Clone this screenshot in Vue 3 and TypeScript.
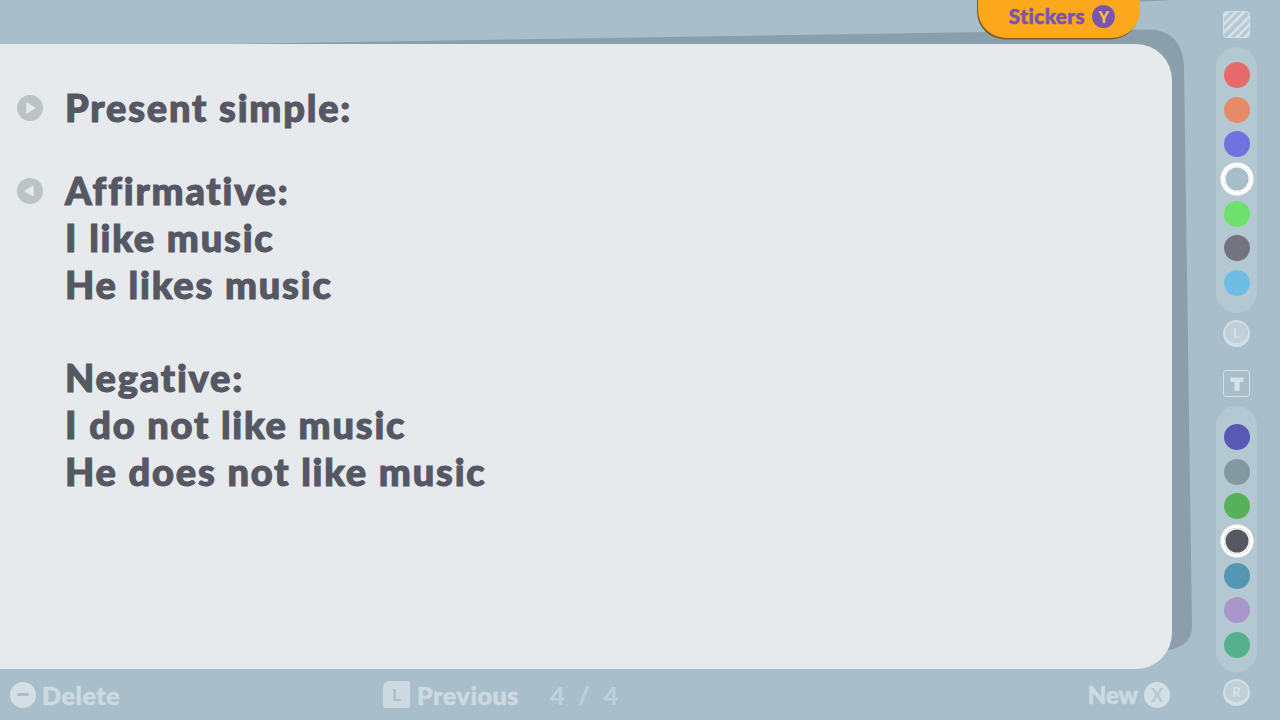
<script setup lang="ts">
interface Swatch { color: string; selected?: boolean }
const inkColors: Swatch[] = [
  { color: '#e66a6c' }, { color: '#e58b68' }, { color: '#7272e0' },
  { color: '#a8bfcb', selected: true }, { color: '#6ee06e' }, { color: '#73737f' }, { color: '#6fbde5' },
]
const textColors: Swatch[] = [
  { color: '#5a58b5' }, { color: '#84999f' }, { color: '#57b05a' },
  { color: '#555763', selected: true }, { color: '#5596b5' }, { color: '#ab96cc' }, { color: '#57b08c' },
]
const lines = ['Affirmative:', 'I like music', 'He likes music', '', 'Negative:', 'I do not like music', 'He does not like music']
</script>

<template>
  <div class="screen">
    <svg class="back" width="1280" height="720" viewBox="0 0 1280 720" aria-hidden="true">
      <path d="M230 44 L1146 29.5 Q1182 29 1184 66 L1192 626 Q1192 646 1168 650 L1100 650 L230 650 Z" fill="#8a9fab" />
      <path d="M1136 0 L1172 0 L1136 2 Z" fill="#8a9fab" />
    </svg>

    <div class="tab">
      <span class="tab-label">Stickers</span>
      <span class="tab-key">Y</span>
    </div>

    <main class="main">
      <div class="top-gap"></div>
      <section class="card">
        <div class="row first">
          <span class="pager">
            <svg width="26" height="26" viewBox="0 0 26 26"><circle cx="13" cy="13" r="13" fill="#bcc3c7" /><path d="M10 8.5 L17.5 13 L10 17.5 Z" fill="#e6eaed" stroke="#e6eaed" stroke-width="1.5" stroke-linejoin="round" /></svg>
          </span>
          <h1 class="text">Present simple:</h1>
        </div>
        <div class="row second">
          <span class="pager">
            <svg width="26" height="26" viewBox="0 0 26 26"><circle cx="13" cy="13" r="13" fill="#bcc3c7" /><path d="M16 8.5 L8.5 13 L16 17.5 Z" fill="#e6eaed" stroke="#e6eaed" stroke-width="1.5" stroke-linejoin="round" /></svg>
          </span>
          <div class="text">
            <div v-for="(line, i) in lines" :key="i" class="line">{{ line }}</div>
          </div>
        </div>
      </section>
      <footer class="footer">
        <div class="foot-item delete">
          <span class="round-key"><span class="minus"></span></span>
          <span class="foot-label">Delete</span>
        </div>
        <div class="foot-item prev">
          <span class="l-key">L</span>
          <span class="foot-label">Previous</span>
        </div>
        <div class="foot-item pages"><span>4</span><span>/</span><span>4</span></div>
        <div class="foot-item new">
          <span class="foot-label tight">New</span>
          <span class="round-key x">X</span>
        </div>
      </footer>
    </main>

    <aside class="rail">
      <svg class="hatch" width="27" height="27" viewBox="0 0 27 27">
        <defs><clipPath id="hatch-clip"><rect x="0.5" y="0.5" width="26" height="26" rx="3" /></clipPath></defs>
        <rect x="0.5" y="0.5" width="26" height="26" rx="3" fill="#b6cad4" stroke="#d3e0e6" />
        <g clip-path="url(#hatch-clip)" stroke="#d8e3e9" stroke-width="2.5">
          <path d="M-3 9 L9 -3 M-3 17 L17 -3 M-3 25 L25 -3 M3 29 L29 3 M11 29 L29 11 M19 29 L29 19" />
        </g>
      </svg>
      <div class="pill">
        <span v-for="s in inkColors" :key="s.color" class="dot" :class="{ selected: s.selected }" :style="{ background: s.color }"></span>
      </div>
      <span class="stick-key l"><span class="stick-inner">L</span></span>
      <span class="t-tool">
        <svg width="18" height="18" viewBox="0 0 18 18"><path d="M3.5 2.5 H14.5 Q15.5 2.5 15.5 3.5 V6 Q15.5 7 14.5 7 H11.5 V14.5 Q11.5 16 9 16 Q6.5 16 6.5 14.5 V7 H3.5 Q2.5 7 2.5 6 V3.5 Q2.5 2.5 3.5 2.5 Z" fill="#d8e3e9" /></svg>
      </span>
      <div class="pill second-pill">
        <span v-for="s in textColors" :key="s.color" class="dot" :class="{ selected: s.selected }" :style="{ background: s.color }"></span>
      </div>
      <span class="stick-key r"><span class="stick-inner">R</span></span>
    </aside>
  </div>
</template>

<style>
html, body { margin: 0; background: #a8bfcb; }
</style>

<style scoped>
.screen {
  position: relative;
  width: 1280px;
  height: 720px;
  overflow: hidden;
  display: flex;
  background: #a8bfcb;
  font-family: Lato, "Open Sans", sans-serif;
  font-weight: 900;
}
.back { position: absolute; left: 0; top: 0; }
.tab {
  position: absolute;
  left: 978px;
  top: -20px;
  width: 162px;
  height: 58px;
  box-sizing: border-box;
  padding: 14px 0 0 6px;
  display: flex;
  align-items: center;
  justify-content: center;
  gap: 7px;
  background: #fca81c;
  border-radius: 0 0 28px 28px;
  box-shadow: -1px 1.5px 0 #7c5a25;
  color: #7a55b0;
  font-size: 20.5px;
  z-index: 2;
}
.tab-label { letter-spacing: 0.5px; -webkit-text-stroke: 0.6px #7a55b0; }
.tab-key {
  width: 23px;
  height: 23px;
  border-radius: 50%;
  background: #7a55b0;
  color: #fcc04c;
  font-size: 16px;
  line-height: 23px;
  text-align: center;
}
.main {
  position: relative;
  width: 1172px;
  display: flex;
  flex-direction: column;
}
.top-gap { height: 44px; flex: none; }
.card {
  height: 625px;
  flex: none;
  box-sizing: border-box;
  padding: 40px 0 0 17px;
  background: #e6eaed;
  border-radius: 0 36px 36px 0;
  color: #555763;
  font-size: 38px;
  line-height: 46.8px;
}
.row { display: flex; align-items: flex-start; }
.second { margin-top: 36px; }
.pager { width: 26px; height: 47px; flex: none; margin-right: 22px; display: flex; align-items: center; }
.pager svg { display: block; margin-top: 1px; }
.text { margin: 0; font: inherit; letter-spacing: 1.8px; -webkit-text-stroke: 1.1px #555763; }
.line { height: 46.8px; }
.footer {
  height: 51px;
  flex: none;
  display: flex;
  align-items: center;
  color: #cddae1;
  font-size: 25px;
  box-sizing: border-box;
  padding: 0 2px 0 10px;
}
.foot-label { letter-spacing: 0.6px; -webkit-text-stroke: 0.6px #cddae1; }
.foot-label.tight { letter-spacing: 0; font-size: 24px; }
.foot-item { display: flex; align-items: center; }
.delete { gap: 6px; width: 373px; }
.prev { gap: 7px; width: 167px; }
.pages { width: 68px; justify-content: space-between; color: #bfd0d9; }
.new { margin-left: auto; gap: 6px; }
.round-key {
  width: 26px;
  height: 26px;
  border-radius: 50%;
  background: #d3dfe5;
  display: flex;
  align-items: center;
  justify-content: center;
}
.minus { width: 12px; height: 3px; background: #a8bfcb; border-radius: 2px; }
.x { color: #b4c8d2; font-size: 18px; font-weight: 700; }
.l-key {
  width: 27px;
  height: 27px;
  border-radius: 6px 2px 2px 2px;
  background: #cddae1;
  color: #a8bfcb;
  font-size: 17px;
  font-weight: 700;
  text-align: center;
  line-height: 27px;
}
.rail {
  position: relative;
  margin-left: 44px;
  width: 41px;
  display: flex;
  flex-direction: column;
  align-items: center;
  padding-top: 11px;
}
.hatch { flex: none; }
.pill {
  margin-top: 9px;
  width: 41px;
  height: 266px;
  box-sizing: border-box;
  padding-top: 15px;
  border-radius: 21px;
  background: #b4c8d2;
  display: flex;
  flex-direction: column;
  align-items: center;
  gap: 8.67px;
  flex: none;
}
.dot {
  width: 26px;
  height: 26px;
  border-radius: 50%;
  box-sizing: border-box;
  flex: none;
}
.dot.selected { box-shadow: inset 0 0 0 1.5px #fff, 0 0 0 3.5px #fff; }
.stick-key {
  margin-top: 7px;
  width: 27px;
  height: 27px;
  flex: none;
  box-sizing: border-box;
  border-radius: 50%;
  background: #d3dfe5;
  padding: 2px 2px 4px;
  display: flex;
}
.stick-inner {
  flex: 1;
  border-radius: 50%;
  background: #bfd0d9;
  color: #d8e3e9;
  font-size: 13px;
  font-weight: 700;
  display: flex;
  align-items: center;
  justify-content: center;
}
.t-tool {
  margin-top: 23px;
  width: 27px;
  height: 27px;
  flex: none;
  box-sizing: border-box;
  border: 1px solid #d3e0e6;
  border-radius: 3px;
  display: flex;
  align-items: center;
  justify-content: center;
}
.second-pill { margin-top: 9px; padding-top: 18px; }
</style>
